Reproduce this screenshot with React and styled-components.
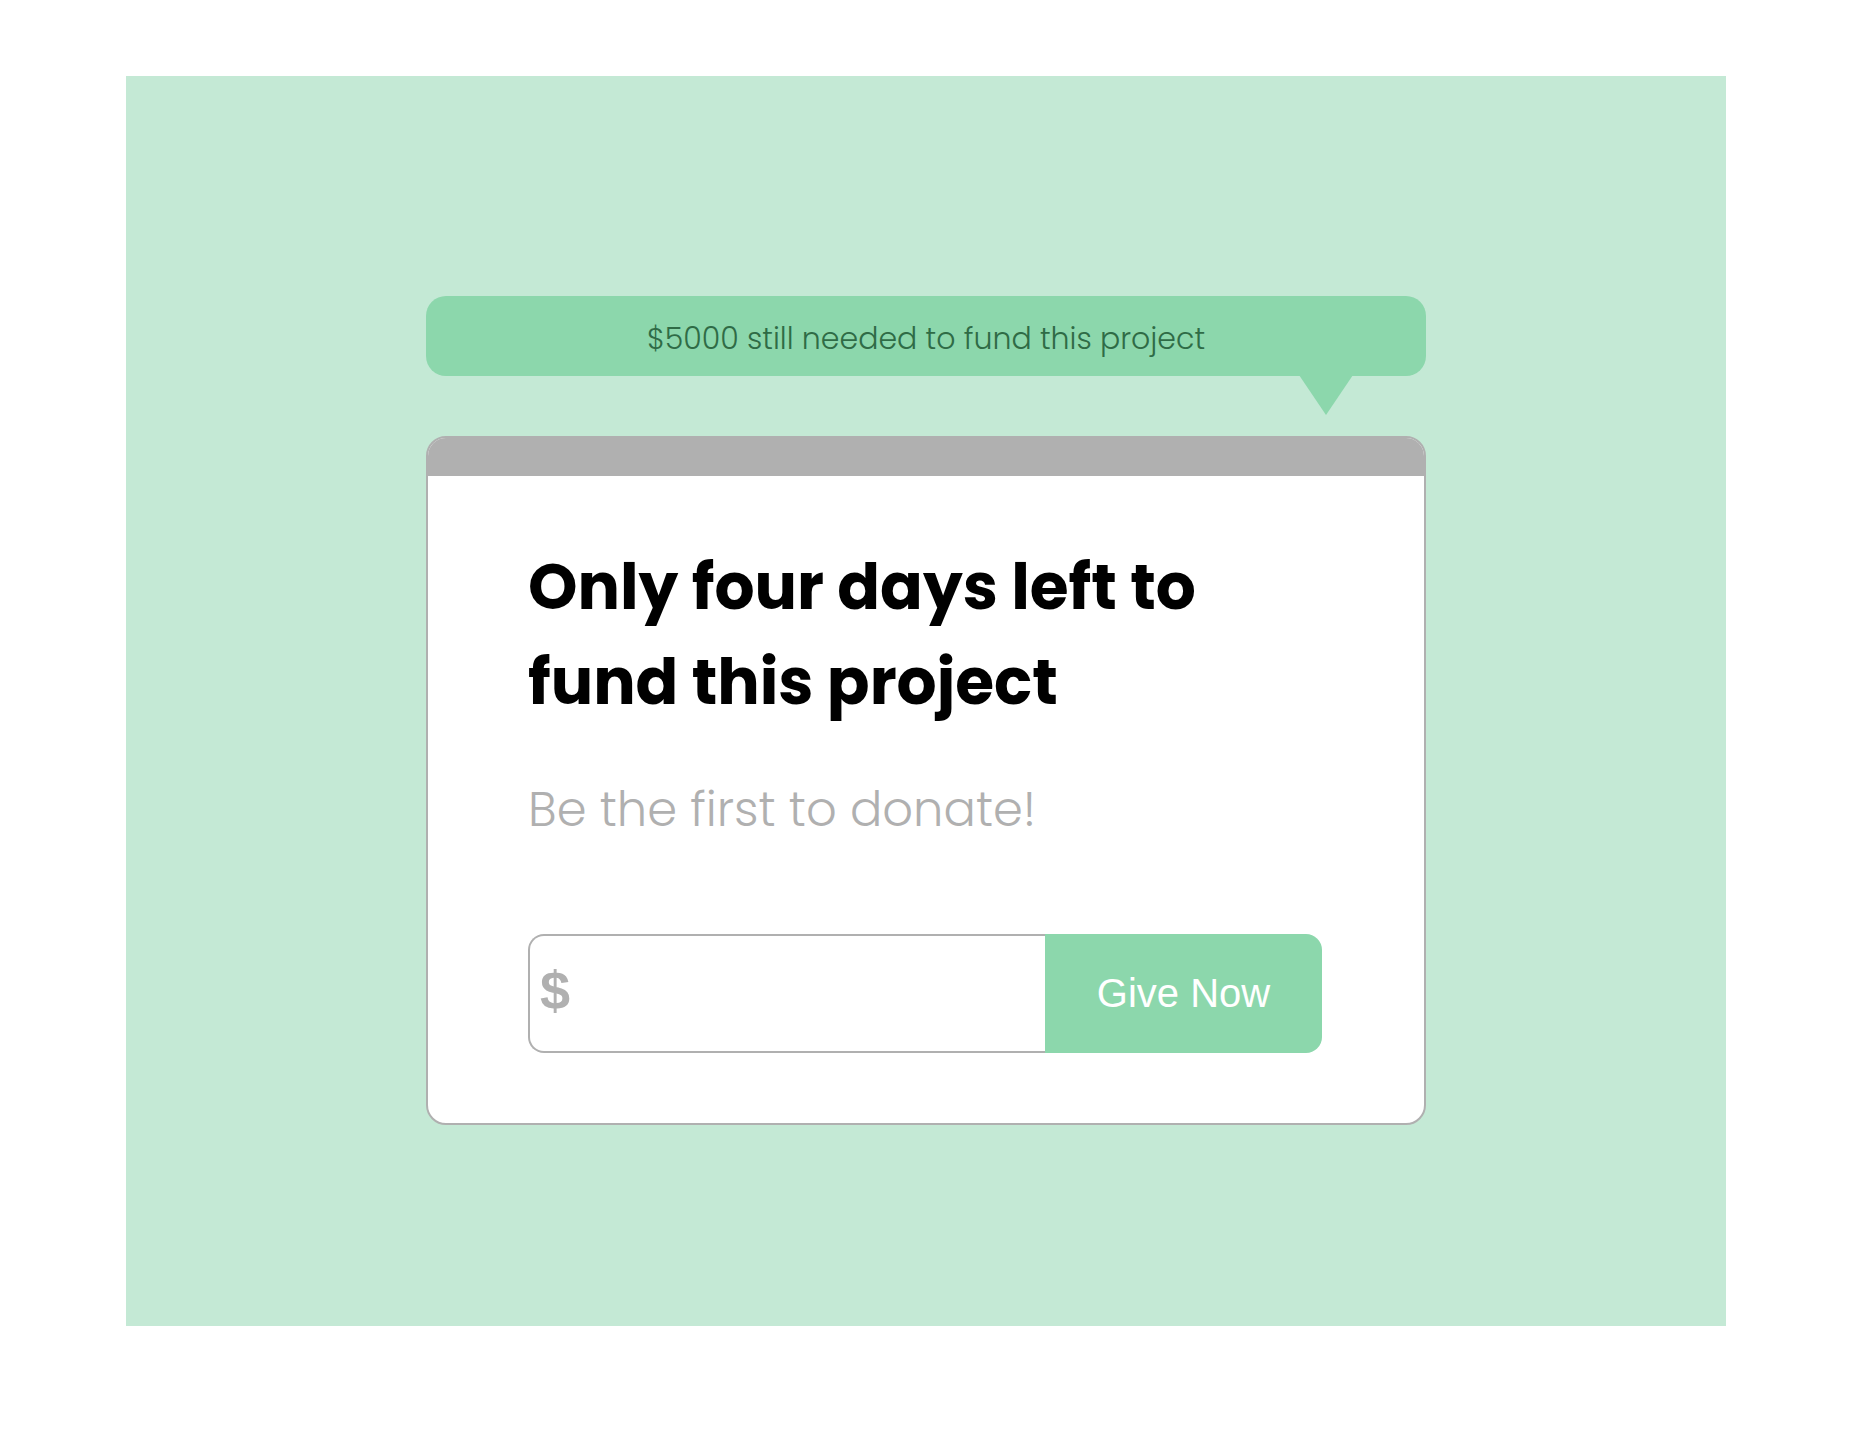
import React from "react";
import styled, { createGlobalStyle } from "styled-components";

const GlobalStyle = createGlobalStyle`
  html, body {
    margin: 0;
    padding: 0;
    background: #ffffff;
  }
  body {
    font-family: "Poppins", "Open Sans", "Liberation Sans", sans-serif;
  }
`;

const Page = styled.div`
  padding: 76px 146px 108px 126px;
`;

const Stage = styled.div`
  width: 1600px;
  height: 1250px;
  box-sizing: border-box;
  background: #c4e9d5;
  padding-top: 220px;
  display: flex;
  flex-direction: column;
  align-items: center;
`;

const Banner = styled.div`
  position: relative;
  width: 1000px;
  height: 80px;
  box-sizing: border-box;
  padding-top: 5px;
  border-radius: 20px;
  background: #8cd7ac;
  display: flex;
  align-items: center;
  justify-content: center;
  color: #2f6b46;
  font-family: "Poppins", "Open Sans", sans-serif;
  font-weight: 300;
  font-size: 30px;

  &::after {
    content: "";
    position: absolute;
    right: 73px;
    bottom: -39px;
    border-left: 27px solid transparent;
    border-right: 27px solid transparent;
    border-top: 40px solid #8cd7ac;
  }
`;

const Card = styled.div`
  margin-top: 60px;
  width: 1000px;
  box-sizing: border-box;
  border: 2px solid #b0b0b0;
  border-radius: 20px;
  background: #ffffff;
  overflow: hidden;
`;

const CardBar = styled.div`
  height: 38px;
  background: #b0b0b0;
`;

const CardBody = styled.div`
  padding: 64px 99px 70px 100px;
`;

const Title = styled.h1`
  margin: 0;
  font-family: "Poppins", "Open Sans", sans-serif;
  font-weight: 700;
  font-size: 63px;
  line-height: 95px;
  color: #000000;
`;

const Subtitle = styled.p`
  margin: 50px 0 0;
  font-family: "Poppins", "Open Sans", sans-serif;
  font-weight: 300;
  font-size: 48px;
  line-height: 60px;
  color: #b0b0b0;
`;

const GiveRow = styled.form`
  margin-top: 94px;
  display: flex;
  width: 794px;
  height: 119px;
`;

const AmountField = styled.label`
  flex: 1;
  min-width: 0;
  display: flex;
  align-items: center;
  box-sizing: border-box;
  border: 2px solid #b0b0b0;
  border-right: none;
  border-radius: 16px 0 0 16px;
  padding: 0 0 8px 10px;
  background: #ffffff;
`;

const Currency = styled.span`
  font-family: "Liberation Sans", Arial, sans-serif;
  font-weight: 700;
  font-size: 54px;
  color: #b0b0b0;
`;

const AmountInput = styled.input`
  flex: 1;
  min-width: 0;
  width: 0;
  border: none;
  outline: none;
  background: transparent;
  font-family: "Liberation Sans", Arial, sans-serif;
  font-size: 40px;
  color: #333333;
`;

const GiveButton = styled.button`
  flex: 0 0 277px;
  border: none;
  border-radius: 0 16px 16px 0;
  background: #8cd7ac;
  color: #ffffff;
  font-family: "Liberation Sans", Arial, sans-serif;
  font-size: 40px;
  padding: 0;
  cursor: pointer;
`;

export default function App() {
  return (
    <>
      <GlobalStyle />
      <Page>
        <Stage>
          <Banner>$5000 still needed to fund this project</Banner>
          <Card>
            <CardBar />
            <CardBody>
              <Title>
                Only four days left to
                <br />
                fund this project
              </Title>
              <Subtitle>Be the first to donate!</Subtitle>
              <GiveRow onSubmit={(e) => e.preventDefault()}>
                <AmountField>
                  <Currency>$</Currency>
                  <AmountInput type="text" aria-label="Amount" />
                </AmountField>
                <GiveButton type="submit">Give Now</GiveButton>
              </GiveRow>
            </CardBody>
          </Card>
        </Stage>
      </Page>
    </>
  );
}
